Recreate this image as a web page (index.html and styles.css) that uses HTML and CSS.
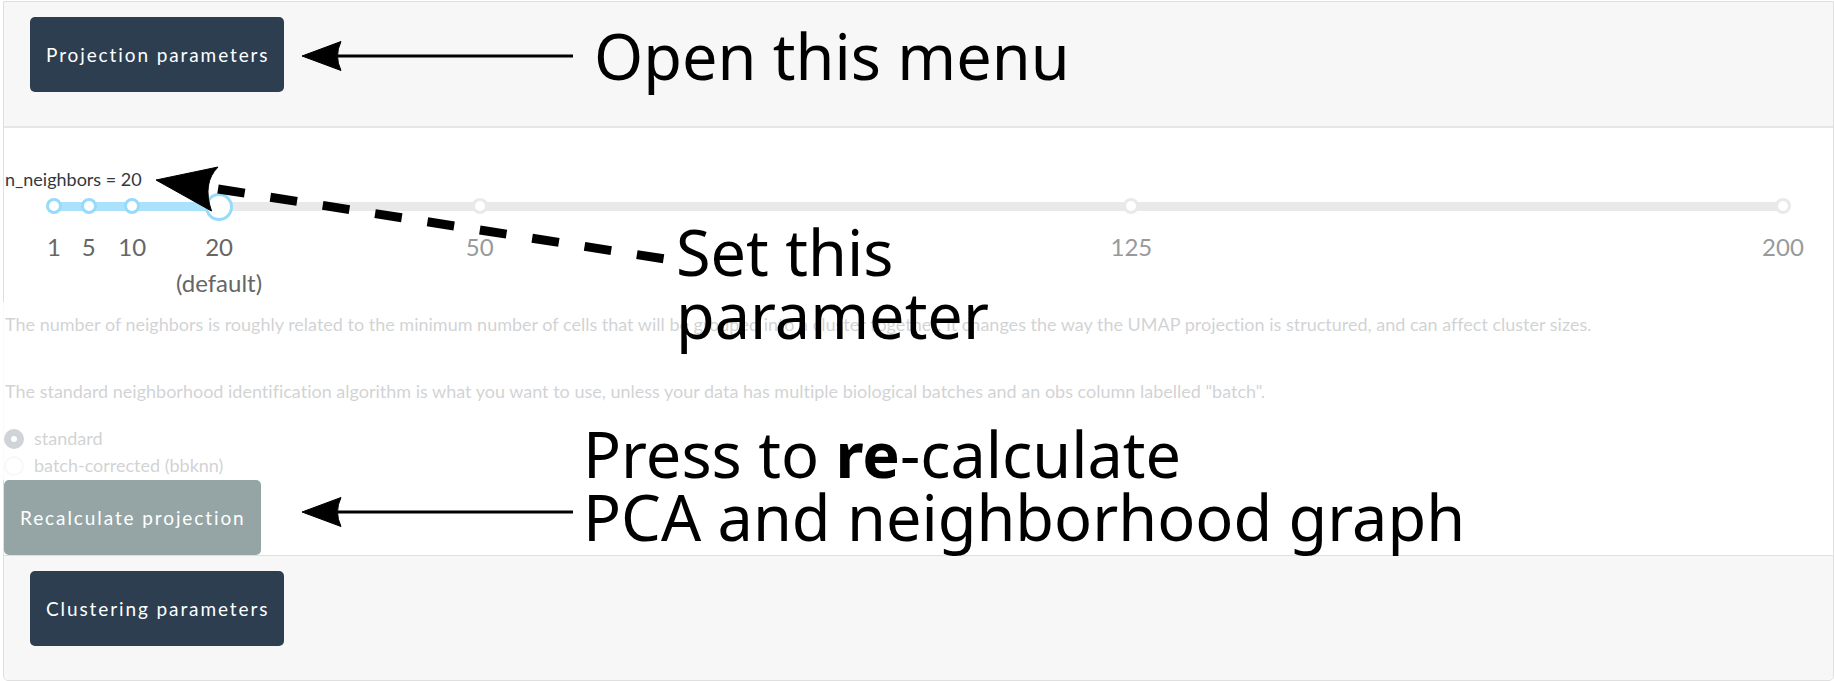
FILE: index.html
```html
<!DOCTYPE html>
<html lang="en">
<head>
<meta charset="utf-8">
<title>Projection parameters</title>
<link rel="stylesheet" href="styles.css">
</head>
<body>
<main class="page">
  <div class="accordion">
    <div class="card-header card-header-first">
      <button class="btn btn-primary" type="button">Projection parameters</button>
    </div>
    <section class="card-body">
      <div class="active-param">
        <label class="param-label" for="neighbors">n_neighbors = 20</label>
        <div class="slider">
          <div class="rail"></div>
          <div class="track" style="width: 9.548%"></div>
          <span class="dot dot-active" style="left: 0%"></span>
          <span class="dot dot-active" style="left: 2.01%"></span>
          <span class="dot dot-active" style="left: 4.523%"></span>
          <span class="dot" style="left: 24.623%"></span>
          <span class="dot" style="left: 62.312%"></span>
          <span class="dot" style="left: 100%"></span>
          <input class="range" id="neighbors" type="range" min="1" max="200" value="20">
          <span class="mark mark-active" style="left: 0%">1</span>
          <span class="mark mark-active" style="left: 2.01%">5</span>
          <span class="mark mark-active" style="left: 4.523%">10</span>
          <span class="mark mark-active" style="left: 9.548%">20<br>(default)</span>
          <span class="mark" style="left: 24.623%">50</span>
          <span class="mark" style="left: 62.312%">125</span>
          <span class="mark" style="left: 100%">200</span>
        </div>
      </div>
      <div class="faded">
        <p class="help">The number of neighbors is roughly related to the minimum number of cells that will be grouped into a cluster together. It changes the way the UMAP projection is structured, and can affect cluster sizes.</p>
        <p class="help">The standard neighborhood identification algorithm is what you want to use, unless your data has multiple biological batches and an obs column labelled "batch".</p>
        <div class="options">
          <label class="option"><input class="radio" type="radio" name="method" checked>standard</label>
          <label class="option"><input class="radio" type="radio" name="method">batch-corrected (bbknn)</label>
        </div>
      </div>
      <button class="btn btn-secondary" type="button">Recalculate projection</button>
    </section>
    <div class="card-header card-header-last">
      <button class="btn btn-primary" type="button">Clustering parameters</button>
    </div>
  </div>

  <svg class="arrows" width="680" height="540" viewBox="0 0 680 540" aria-hidden="true">
    <g id="solid-arrow">
      <path d="M338 56H573" stroke="#000" stroke-width="3"/>
      <path d="M302 56L341 41.500Q334 56 341 70.500Z" stroke="#000" stroke-linejoin="round"/>
    </g>
    <use href="#solid-arrow" y="456"/>
    <path d="M218 189L665 259" stroke="#000" stroke-width="9" stroke-dasharray="27 26"/>
    <path d="M156 180L218 167Q202 183 211.500 211Z" stroke="#000" stroke-linejoin="round"/>
  </svg>
  <div class="note note-open">Open this menu</div>
  <div class="note note-set">Set this<br>parameter</div>
  <div class="note note-press">Press to <b>re</b>-calculate<br>PCA and neighborhood graph</div>
</main>
</body>
</html>
```
FILE: styles.css
```css
* {
  box-sizing: border-box;
}

body {
  margin: 0;
  background: #fff;
  color: #32383e;
  font: 18px/27px Lato, "Liberation Sans", sans-serif;
  font-variant-ligatures: none;
}

.page {
  position: relative;
  padding: 1px 0 0 3px;
}

.accordion {
  border: 1px solid #dfdfdf;
  border-radius: 0 0 5px 5px;
}

.card-header {
  padding: 15px 26px 34px;
  background: #f7f7f7;
}

.card-header-first {
  border-bottom: 2px solid #e6e6e6;
}

.card-header-last {
  border-top: 1px solid #dfdfdf;
  border-radius: 0 0 5px 5px;
}

.btn {
  display: block;
  height: 75px;
  padding: 0 15px 0 16px;
  border: 0;
  border-radius: 5px;
  color: #fff;
  font: 19px/27px Lato, "Liberation Sans", sans-serif;
  letter-spacing: 0.1em;
}

.btn-primary {
  background: #2c3e50;
}

.btn-secondary {
  background: #95a5a6;
}

.card-body {
  padding-top: 38px;
}

.active-param {
  height: 136px;
}

.param-label {
  display: block;
  padding-left: 1px;
}

.slider {
  position: relative;
  height: 28px;
  margin: 0 50px;
}

.rail,
.track {
  position: absolute;
  top: 9px;
  left: 0;
  height: 9px;
  background: #e9e9e9;
}

.rail {
  width: 100%;
}

.track {
  background: #abe2fb;
}

.dot {
  position: absolute;
  top: 5px;
  width: 16px;
  height: 16px;
  margin-left: -8px;
  border: 3px solid #e9e9e9;
  border-radius: 50%;
  background: #fff;
}

.dot-active {
  border-color: #96dbfa;
}

.range {
  position: absolute;
  top: 0;
  left: -14px;
  width: calc(100% + 28px);
  height: 28px;
  margin: 0;
  appearance: none;
  background: transparent;
}

.range::-webkit-slider-thumb {
  appearance: none;
  width: 28px;
  height: 28px;
  border: 3px solid #96dbfa;
  border-radius: 50%;
  background: #fff;
}

.mark {
  position: absolute;
  top: 36px;
  transform: translateX(-50%);
  color: #999;
  font-size: 24px;
  line-height: 36px;
  text-align: center;
}

.mark-active {
  color: #666;
}

.faded {
  position: relative;
  height: 178px;
  padding-top: 9px;
}

.faded::before {
  content: "";
  position: absolute;
  top: 0;
  bottom: 0;
  left: -1px;
  width: 1px;
  background: #fafafa;
}

.help,
.options {
  opacity: 0.22;
}

.help {
  margin: 0 0 40px;
  padding-left: 1px;
}

.options {
  margin-top: -20px;
}

.option {
  display: flex;
  align-items: center;
  gap: 10px;
}

.radio {
  appearance: none;
  width: 20px;
  height: 20px;
  margin: 0;
  border: 2px solid #dfe2e5;
  border-radius: 50%;
}

.radio:checked {
  border: 7px solid #2c3e50;
}

.arrows {
  position: absolute;
  top: 0;
  left: 0;
}

.note {
  position: absolute;
  color: #000;
  font: 63px/63px "Noto Sans", "Open Sans", sans-serif;
  white-space: nowrap;
}

.note-open {
  top: 24px;
  left: 594px;
}

.note-set {
  top: 220px;
  left: 676px;
}

.note-press {
  top: 422px;
  left: 583px;
}
```
